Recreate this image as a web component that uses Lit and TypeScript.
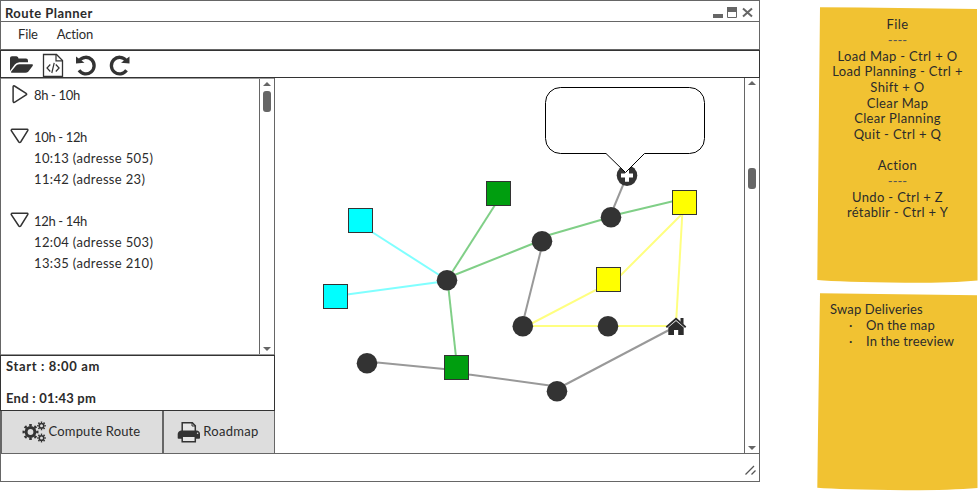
import { LitElement, html, svg, css } from "lit";
import { customElement } from "lit/decorators.js";

type Point = [number, number];

const INK = "#333";

const slots = [
  { label: "8h - 10h", open: false, stops: [] as string[] },
  { label: "10h - 12h", open: true, stops: ["10:13 (adresse 505)", "11:42 (adresse 23)"] },
  { label: "12h - 14h", open: true, stops: ["12:04 (adresse 503)", "13:35 (adresse 210)"] },
];

const routes: { color: string; points: Point[] }[] = [
  { color: "#80ffff", points: [[372, 232], [447, 280]] },
  { color: "#80ffff", points: [[347, 294.5], [447, 281]] },
  { color: "#80cf87", points: [[495, 205], [449, 277]] },
  { color: "#80cf87", points: [[447, 278], [542, 240]] },
  { color: "#80cf87", points: [[542, 237], [611, 217]] },
  { color: "#80cf87", points: [[611, 216], [674, 201]] },
  { color: "#80cf87", points: [[448, 284], [456, 357]] },
  { color: "#999", points: [[626, 178], [611, 214]] },
  { color: "#999", points: [[542, 246], [523, 322]] },
  { color: "#999", points: [[367, 361.5], [444, 369], [469, 374.5], [557, 386.5]] },
  { color: "#999", points: [[557, 389], [669, 330]] },
  { color: "#ffff80", points: [[523, 328], [596, 290], [621, 275], [681, 215]] },
  { color: "#ffff80", points: [[682.3, 214], [676.3, 319]] },
  { color: "#ffff80", points: [[527, 326], [668, 326]] },
];

const crossings: Point[] = [
  [447, 280.3], [542, 241.2], [611, 217.3], [627, 175.6],
  [522.8, 326.3], [608, 326.3], [367, 363.3], [557, 391.3],
];

const deliveries: { at: Point; color: string }[] = [
  { at: [348.5, 208.5], color: "#00ffff" },
  { at: [323.5, 284.5], color: "#00ffff" },
  { at: [486.5, 181.5], color: "#009e0f" },
  { at: [444.5, 355.5], color: "#009e0f" },
  { at: [672.5, 190.5], color: "#ffff00" },
  { at: [596.5, 267.5], color: "#ffff00" },
];

const gear = (cx: number, cy: number, r: number, w: number, tooth: number) => {
  const outer = r + w / 2 + tooth / 2 - 0.2;
  return svg`
    <circle cx=${cx} cy=${cy} r=${r} fill="none" stroke=${INK} stroke-width=${w} />
    <circle cx=${cx} cy=${cy} r=${outer} fill="none" stroke=${INK} stroke-width=${tooth}
      pathLength="16" stroke-dasharray="1 1" stroke-dashoffset="0.5" />`;
};

@customElement("scroll-bar")
class ScrollBar extends LitElement {
  static styles = css`
    :host { display: flex; flex-direction: column; align-items: center; justify-content: space-between;
      box-sizing: border-box; width: 15px; background: #fff; border-left: 1px solid #666; position: relative; }
    svg { display: block; width: 8px; height: 4px; }
    .up { margin-top: 3px; }
    .down { margin-bottom: 3px; }
    .thumb { position: absolute; left: 3px; top: var(--thumb-top, 12px); width: 8px; height: 21px;
      border-radius: 3px; background: #666; }
  `;
  render() {
    return html`
      <svg class="up" viewBox="0 0 8 4"><path d="M0 4L4 0L8 4Z" fill="#666" /></svg>
      <div class="thumb"></div>
      <svg class="down" viewBox="0 0 8 4"><path d="M0 0H8L4 4Z" fill="#666" /></svg>`;
  }
}

@customElement("route-map")
class RouteMap extends LitElement {
  static styles = css`
    :host { display: block; }
    svg { display: block; width: 469px; height: 375px; }
  `;
  render() {
    return html`<svg viewBox="275 78 469 375">
      ${routes.map((r) => svg`<polyline fill="none" stroke=${r.color} stroke-width="2"
        points=${r.points.map((p) => p.join(",")).join(" ")} />`)}
      ${crossings.map(([x, y]) => svg`<circle cx=${x} cy=${y} r="10.3" fill=${INK} />`)}
      ${deliveries.map((d) => svg`<rect x=${d.at[0]} y=${d.at[1]} width="24" height="24"
        fill=${d.color} stroke=${INK} />`)}
      <path d="M625 169.5h4v4h4v4h-4v4.3h-4v-4.3h-4v-4h4z" fill="#fff" />
      <path d="M560.5 87.5H689.5A15 15 0 0 1 704.5 102.5V138.5A15 15 0 0 1 689.5 153.5H644.5L625.5 172.5L606 153.5H560.5A15 15 0 0 1 545.5 138.5V102.5A15 15 0 0 1 560.5 87.5Z"
        fill="#fff" stroke="#000" />
      <path d="M668.3 327.6L676 321L683.7 327.6V335H678.2V330H674V335H668.3Z" fill="#2b2b2b" />
      <path d="M666.3 327.3L676 318.8L685.7 327.3" fill="none" stroke="#2b2b2b" stroke-width="1.8" />
      <path d="M680.5 318H683.5V324.5L680.5 322Z" fill="#2b2b2b" />
    </svg>`;
  }
}

@customElement("app-root")
export class AppRoot extends LitElement {
  static styles = css`
    :host { display: block; position: relative; z-index: 0; width: 979px; height: 493px; background: #fff;
      overflow: hidden; font: 13px "Lato", sans-serif; color: #2b2b2b; letter-spacing: 0.35px; white-space: nowrap; }
    * { box-sizing: border-box; }
    svg { display: block; flex: none; }
    .page { display: flex; align-items: flex-start; }
    .window { width: 760px; height: 482px; border: 1px solid #666; display: flex; flex-direction: column; }
    .title { height: 21px; border-bottom: 1px solid #666; display: flex; justify-content: space-between;
      font-weight: 700; line-height: 25px; padding-left: 4px; letter-spacing: 0.45px; }
    .menu { height: 28px; border-bottom: 1px solid #666; display: flex; gap: 19px; padding-left: 17px;
      line-height: 25px; letter-spacing: -0.15px; }
    .toolbar { height: 28px; margin: 0 -1px; border: 1px solid #333; }
    .work { display: flex; height: 375px; }
    .side { width: 274px; display: flex; flex-direction: column; border-right: 1px solid #666; }
    .tree { height: 277px; display: flex; justify-content: space-between;
      border-top: 1px solid #999; border-bottom: 1px solid #999; }
    .slots { padding: 5px 0 0 8px; display: flex; flex-direction: column; gap: 21px; letter-spacing: 0.35px; }
    .row { display: flex; align-items: center; gap: 4px; height: 21px; letter-spacing: -0.35px; }
    .stop { height: 21px; line-height: 22px; padding-left: 25px; }
    .times { height: 56px; margin: 0 -1px; border: 1px solid #333; font-weight: 700; letter-spacing: 0.65px;
      padding: 2px 5px; line-height: 16px; display: flex; flex-direction: column; gap: 16px; }
    .end { letter-spacing: 0.25px; }
    .actions { display: flex; height: 42px; }
    .button { display: flex; align-items: center; justify-content: center; background: #ddd;
      border-left: 1px solid #666; gap: 3px; padding: 0 2px 1px 0; letter-spacing: 0.2px; }
    .button span { padding-bottom: 1px; }
    .compute { width: 162px; border-right: 1px solid #666; letter-spacing: 0.15px; }
    .roadmap { flex: 1; letter-spacing: 0.3px; }
    .status { height: 28px; border-top: 1px solid #666; display: flex; justify-content: flex-end;
      align-items: flex-end; padding: 0 3px 6px 0; }
    .notes { margin-left: 57px; }
    .note { position: relative; line-height: 15.67px; width: 161px; }
    .paper { position: absolute; left: 0; top: 0; z-index: -1; }
    .shortcuts { margin-top: 7px; height: 278px; padding-top: 10.4px; text-align: center; letter-spacing: 0.35px; }
    .rule { letter-spacing: 0; color: #555; }
    .swap { margin-top: 8px; height: 199px; padding: 9.4px 0 0 13px; letter-spacing: 0.15px; }
    .bullet { display: flex; padding-left: 19px; gap: 13px; }
    .dot { width: 4px; }
  `;

  triangle(open: boolean) {
    return html`<svg width="21" height="21" viewBox="0 0 21 21">
      <path d=${open ? "M3.2 3.3H18.2Q19.3 3.5 18.7 4.7L11.7 16Q10.7 17 9.8 16L2.3 4.7Q1.9 3.6 3.2 3.3Z"
        : "M4.1 2.8Q4.3 1.4 5.5 2L17.1 9.3Q18.2 10.1 17.1 11L5.5 18.3Q4.3 18.7 4.1 17.4Z"}
        fill="none" stroke=${INK} stroke-width="1.5" />
    </svg>`;
  }

  render() {
    return html`<div class="page">
      <div class="window">
        <div class="title"><span>Route Planner</span>
          <svg width="48" height="20" viewBox="711 1 48 20">
            <path d="M713 14h10v4h-10z" fill="#666" />
            <path d="M727.5 7.5h9v10h-9z" fill="#fff" stroke="#666" /><path d="M727 7h10v5h-10z" fill="#666" />
            <path d="M743 8.5L752 16.5M752 8.5L743 16.5" stroke="#666" stroke-width="2" />
          </svg>
        </div>
        <div class="menu"><span>File</span><span>Action</span></div>
        <div class="toolbar">
          <svg width="140" height="26" viewBox="1 51 140 26">
            <path d="M10 71V58Q10 56.3 12 56.3H16.5Q18.5 56.5 18.5 58.6H26Q28 58.7 28 60.8V62.3H19.5Q16.5 62.5 14.8 64.6Z" fill=${INK} />
            <path d="M19 64.2H32Q33.8 64.4 32.6 66L28.2 71.7Q27.2 72.8 25.2 72.8H11.6Q10.4 72.6 11.2 71.5L15.7 65.9Q16.8 64.4 19 64.2Z" fill=${INK} />
            <g fill="none" stroke=${INK}>
              <path d="M43.5 54.5H56.5L62.5 60.5V76.5H43.5Z" stroke-width="1.3" />
              <path d="M56 54.5V60.8H62.5" stroke-width="1.2" />
              <path d="M50.3 64.5L47 68L50.3 71.5M55.8 64.5L59.1 68L55.8 71.5M54.2 62.8L51.8 73" stroke-width="1.2" />
              <path d="M79.5 60.2A8.3 8.3 0 1 1 79 70.3" stroke-width="3.3" />
              <path d="M126 60.2A8.3 8.3 0 1 0 126.5 70.3" stroke-width="3.3" />
            </g>
            <path d="M76 56.5L84.5 62.8L76 63.5ZM129.5 56.5L121 62.8L129.5 63.5Z" fill=${INK} />
          </svg>
        </div>
        <div class="work">
          <div class="side">
            <div class="tree">
              <div class="slots">${slots.map((s) => html`<div>
                <div class="row">${this.triangle(s.open)}<span>${s.label}</span></div>
                ${s.stops.map((t) => html`<div class="stop">${t}</div>`)}
              </div>`)}</div>
              <scroll-bar></scroll-bar>
            </div>
            <div class="times"><span>Start : 8:00 am</span><span class="end">End : 01:43 pm</span></div>
            <div class="actions">
              <div class="button compute">
                <svg width="24" height="24" viewBox="0 0 24 24">
                  ${gear(8.5, 12, 4.4, 3, 2.3)}${gear(19.5, 5.8, 2.3, 1.6, 1.5)}${gear(19.5, 18, 2.3, 1.6, 1.5)}
                </svg><span>Compute Route</span>
              </div>
              <div class="button roadmap">
                <svg width="23" height="22" viewBox="177 421 23 22">
                  <path d="M182.2 431V422.7H192.3L195.3 425.7V431" fill="#e6e6e6" stroke=${INK} stroke-width="1.5" />
                  <path d="M192 422.5V426H195.5" fill="none" stroke=${INK} stroke-width="1" />
                  <path d="M181 430.5H197Q200 431 200 434V438Q200 438.7 199 438.7H178.5Q177.7 438.7 177.7 438V434Q178 431 181 430.5Z" fill=${INK} />
                  <path d="M182.2 436.2H195.3V441.7H182.2Z" fill="#e6e6e6" stroke=${INK} stroke-width="1.5" />
                  <circle cx="197.6" cy="433.3" r=".8" fill="#ddd" />
                </svg><span>Roadmap</span>
              </div>
            </div>
          </div>
          <route-map></route-map>
          <scroll-bar style="--thumb-top: 90px"></scroll-bar>
        </div>
        <div class="status"><svg width="11" height="10" viewBox="0 0 11 10">
          <path d="M0.5 9.5L9 1M6.5 9.5L10.5 5.5" stroke="#555" stroke-width="1.3" /></svg></div>
      </div>
      <div class="notes">
        <div class="note shortcuts">
          <svg class="paper" width="161" height="278" viewBox="817 7 161 278">
            <path d="M820 7.3L860 7.6L977 9L977.3 200L977.5 280.5Q950 283 905 282.8Q840 282 817.3 280L818 200Z" fill="#f1c232" />
          </svg>
          <div>File</div><div class="rule">----</div>
          <div>Load Map - Ctrl + O</div><div>Load Planning - Ctrl +</div><div>Shift + O</div>
          <div>Clear Map</div><div>Clear Planning</div><div>Quit - Ctrl + Q</div><div>&nbsp;</div>
          <div>Action</div><div class="rule">----</div>
          <div>Undo - Ctrl + Z</div><div>rétablir - Ctrl + Y</div>
        </div>
        <div class="note swap">
          <svg class="paper" width="161" height="199" viewBox="817 293 161 199">
            <path d="M820 293.2L860 293.7L977 295.2L977.3 430L977.5 488Q950 490.3 905 490.2Q840 489.6 817.3 487.8L818 430Z" fill="#f1c232" />
          </svg>
          <div>Swap Deliveries</div>
          <div class="bullet"><span class="dot">·</span><span>On the map</span></div>
          <div class="bullet"><span class="dot">·</span><span>In the treeview</span></div>
        </div>
      </div>
    </div>`;
  }
}
